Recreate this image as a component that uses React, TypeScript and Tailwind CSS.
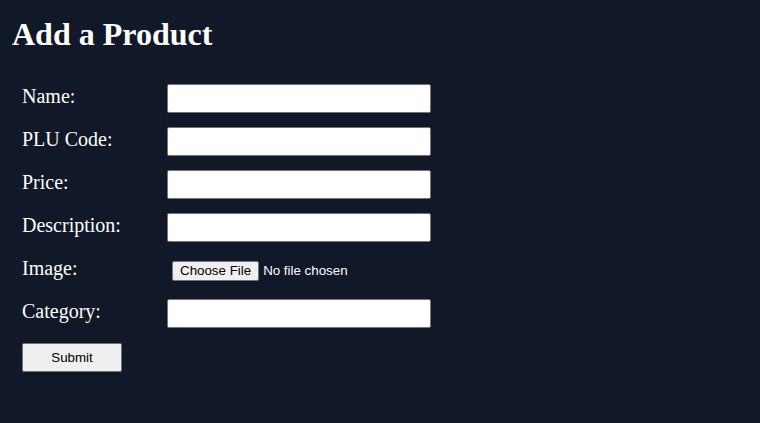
import React from 'react'

const fields = [
    { label: 'Name:', type: 'text' },
    { label: 'PLU Code:', type: 'text' },
    { label: 'Price:', type: 'text' },
    { label: 'Description:', type: 'text' },
    { label: 'Image:', type: 'file' },
    { label: 'Category:', type: 'text' },
]

export default function App() {
    return (
        <div className="min-h-screen bg-[#111827] px-3 pt-4 text-white font-['Liberation_Serif',serif]">
            <h1 className="text-[32px] leading-[37px] font-bold">Add a Product</h1>
            <form className="mt-[31px] px-[10px] flex flex-col gap-[14px]" onSubmit={(e) => e.preventDefault()}>
                {fields.map((f) => (
                    <div key={f.label} className="flex items-center h-[29px]">
                        <label className="w-[145px] text-[20px] leading-[23px] mb-[4px]">{f.label}</label>
                        {f.type === 'file' ? (
                            <input
                                type="file"
                                className="w-[264px] pl-[5px] text-[13.33px] leading-[16px] font-['Liberation_Sans',Arial,sans-serif] text-white
                                file:mr-[4px] file:px-[7px] file:py-[1px] file:border file:border-solid file:border-[#767676] file:rounded-[2px] file:bg-[#efefef] file:text-black"
                            />
                        ) : (
                            <input
                                type="text"
                                className="w-[264px] h-[29px] bg-white border border-[#767676] rounded-[2px] px-[5px] text-black text-[13.33px] font-['Liberation_Sans',Arial,sans-serif]"
                            />
                        )}
                    </div>
                ))}
                <div className="mt-[1px]">
                    <button
                        type="submit"
                        className="w-[100px] h-[29px] bg-[#efefef] border border-[#767676] rounded-[2px] text-black text-[13.33px] font-['Liberation_Sans',Arial,sans-serif]"
                    >
                        Submit
                    </button>
                </div>
            </form>
        </div>
    )
}
